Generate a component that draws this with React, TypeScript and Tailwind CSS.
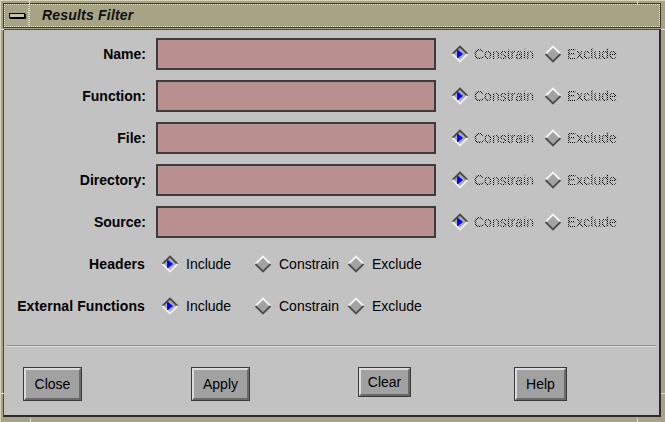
import React from 'react';

const font = "font-['Liberation_Sans',Arial,sans-serif]";

function Diamond({ on }: { on: boolean }) {
  return (
    <svg width="18" height="18" viewBox="0 0 18 18" className="shrink-0">
      <polygon points="9,1 17,9 9,17 1,9" fill={on ? '#ababab' : '#a3a3a3'} />
      <polyline points="1.5,9 9,1.5 16.5,9" fill="none" stroke={on ? '#4a4a4a' : '#f4f4f4'} strokeWidth="1.8" />
      <polyline points="1.5,9 9,16.5 16.5,9" fill="none" stroke={on ? '#f0f0f0' : '#4e4e4e'} strokeWidth="1.8" />
      {on && <polygon points="7,5 12,9 7,13" fill="#0000ff" />}
      {on && <line x1="6.5" y1="5" x2="6.5" y2="13" stroke="#2a2a2a" strokeWidth="1" />}
    </svg>
  );
}

function Radio({ label, on, dim }: { label: string; on: boolean; dim?: boolean }) {
  return (
    <div className="flex items-center w-[93px] shrink-0">
      <Diamond on={on} />
      {dim ? (
        <span className="ml-[5px] text-[14px] text-transparent bg-clip-text bg-[repeating-conic-gradient(#000_0_25%,transparent_0_50%)] bg-[length:2px_2px]">
          {label}
        </span>
      ) : (
        <span className="ml-[7px] text-[14px] text-black">{label}</span>
      )}
    </div>
  );
}

function FieldRow({ label }: { label: string }) {
  return (
    <div className="flex items-center h-[32px]">
      <div className="w-[142px] text-right font-bold text-[14px] text-black">{label}</div>
      <div className="ml-[10px] w-[280px] h-[32px] bg-[#b98f8f] border-2 border-[#3c3c3c]" />
      <div className="ml-[15px] flex">
        <Radio label="Constrain" on dim />
        <Radio label="Exclude" on={false} dim />
      </div>
    </div>
  );
}

function ChoiceRow({ label }: { label: string }) {
  return (
    <div className="flex items-center h-[32px]">
      <div className="w-[141px] text-right font-bold text-[14px] tracking-[0.1px] text-black">{label}</div>
      <div className="ml-[16px] flex">
        <Radio label="Include" on />
        <Radio label="Constrain" on={false} />
        <Radio label="Exclude" on={false} />
      </div>
    </div>
  );
}

function Button({ label, w, h, className = '' }: { label: string; w: string; h: string; className?: string }) {
  return (
    <div className={`${w} ${h} border border-[#3a3a3a] ${className}`}>
      <div className="w-full h-full bg-[#a1a1a1] border-2 border-t-[#dcdcdc] border-l-[#dcdcdc] border-b-[#6a6a6a] border-r-[#6a6a6a] flex items-center justify-center text-[14px] text-black">
        {label}
      </div>
    </div>
  );
}

export default function App() {
  return (
    <div className={`${font} relative w-[665px] h-[422px] bg-[#a7a385] border-l border-t border-[#d9d5bd] pt-[2px] pl-[2px] pr-[4px] pb-[5px] flex flex-col`}>
      {/* resize corner ticks */}
      <div className="absolute left-[28px] top-0 w-px h-[3px] bg-[#e2dfca]" />
      <div className="absolute left-0 top-[28px] w-[3px] h-px bg-[#e2dfca]" />
      <div className="absolute left-[636px] top-0 w-px h-[3px] bg-[#e2dfca]" />
      <div className="absolute right-0 top-[28px] w-[4px] h-px bg-[#e2dfca]" />
      <div className="absolute left-[29px] bottom-0 w-px h-[4px] bg-[#e2dfca]" />
      <div className="absolute left-[636px] bottom-0 w-px h-[4px] bg-[#e2dfca]" />
      <div className="absolute left-0 top-[392px] w-[3px] h-px bg-[#e2dfca]" />
      <div className="absolute right-0 top-[392px] w-[4px] h-px bg-[#e2dfca]" />

      {/* title bar */}
      <div className="h-[25px] flex border border-[#3d3b30] shrink-0">
        <div className="w-[25px] h-full border border-dotted border-[#e0ddc8] flex items-center justify-center">
          <div className="w-[16px] h-[5px] border border-black bg-[#c9c5ab] shadow-[1px_1px_0_#000]" />
        </div>
        <div className="flex-1 h-full border border-dotted border-[#e0ddc8] flex items-center pl-[12px]">
          <span className="italic font-bold text-[14px] text-[#111] tracking-[0.2px]">Results Filter</span>
        </div>
      </div>

      {/* content */}
      <div className="flex-1 mt-[1px] bg-[#c2c2c2] border-l border-t border-[#4a4a4a] border-r-2 border-b-2 border-r-[#2c2c2c] border-b-[#2c2c2c] flex flex-col">
        <div className="flex flex-col gap-[10px] pt-[8px]">
          <FieldRow label="Name:" />
          <FieldRow label="Function:" />
          <FieldRow label="File:" />
          <FieldRow label="Directory:" />
          <FieldRow label="Source:" />
          <ChoiceRow label="Headers" />
          <ChoiceRow label="External Functions" />
        </div>

        <div className="mt-[23px] mx-[3px] h-px bg-[#8e8e8e] shadow-[0_1px_0_#dedede]" />

        <div className="mt-[21px] flex items-start">
          <Button label="Close" w="w-[59px]" h="h-[34px]" className="ml-[19px]" />
          <Button label="Apply" w="w-[59px]" h="h-[34px]" className="ml-[109px]" />
          <Button label="Clear" w="w-[53px]" h="h-[30px]" className="ml-[108px]" />
          <Button label="Help" w="w-[53px]" h="h-[34px]" className="ml-[103px]" />
        </div>
      </div>
    </div>
  );
}
